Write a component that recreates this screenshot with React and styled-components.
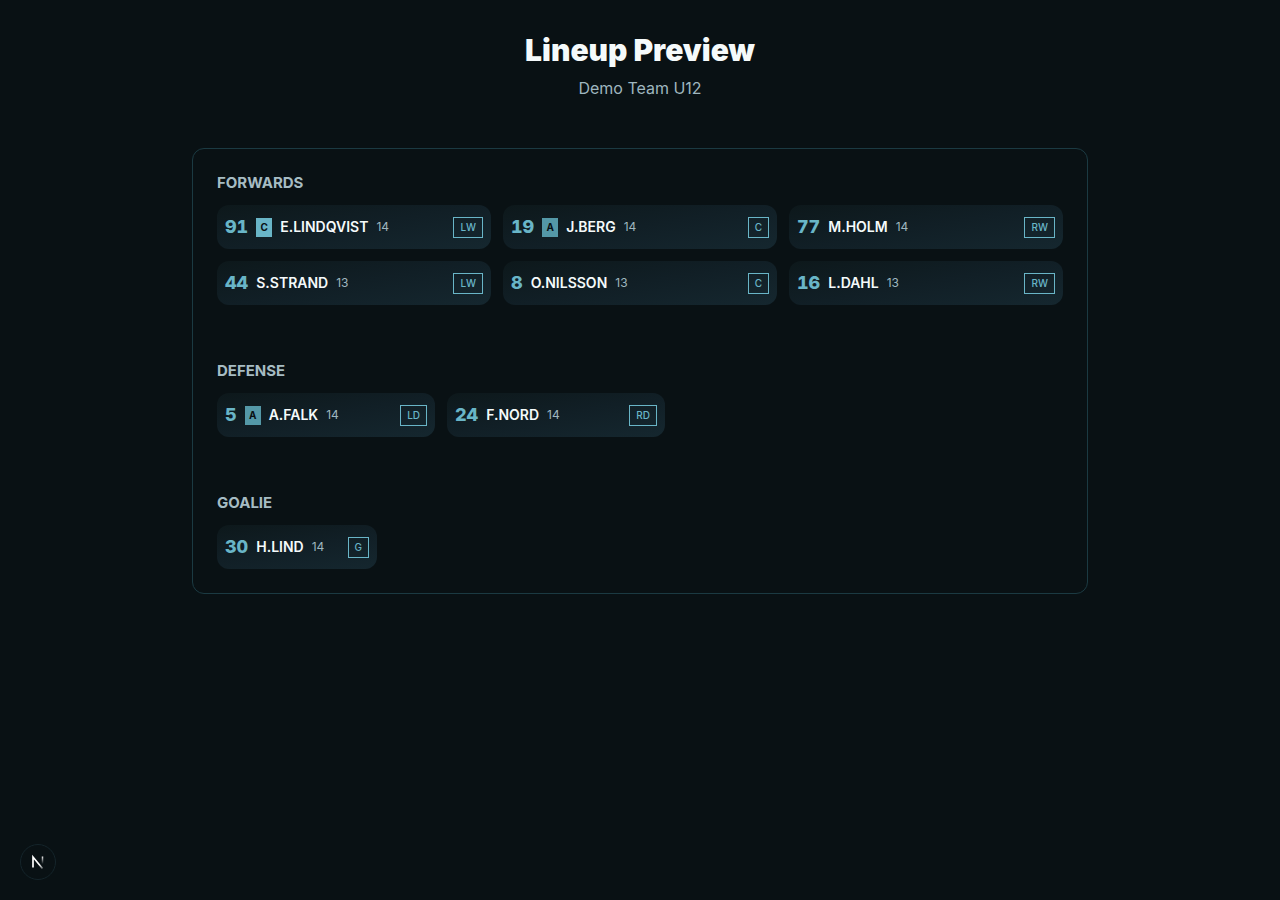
import React from 'react';
import styled, { createGlobalStyle } from 'styled-components';

const GlobalStyle = createGlobalStyle`
  *, *::before, *::after {
    box-sizing: border-box;
  }
  body {
    margin: 0;
    background: #091114;
    color: #f5fafb;
    font-family: Inter, 'Liberation Sans', sans-serif;
    -webkit-font-smoothing: antialiased;
  }
`;

const Page = styled.main`
  max-width: 960px;
  min-height: 100vh;
  margin: 0 auto;
  padding: 32px;
`;

const Header = styled.header`
  margin-bottom: 48px;
  text-align: center;
`;

const Title = styled.h1`
  margin: 0 0 8px;
  font-size: 30px;
  font-weight: 900;
  line-height: 36px;
`;

const Subtitle = styled.p`
  margin: 0;
  color: #9fb6bf;
  font-size: 16px;
  line-height: 24px;
`;

const Panel = styled.div`
  display: flex;
  flex-direction: column;
  gap: 56px;
  padding: 24px;
  border: 1px solid #1b3a42;
  border-radius: 12px;
`;

const SectionTitle = styled.h2`
  margin: 0 0 12px;
  color: #a6bcc3;
  font-size: 15px;
  font-weight: 700;
  line-height: 20px;
  text-transform: uppercase;
`;

const PlayerGrid = styled.ul`
  display: grid;
  grid-template-columns: repeat(${({ $columns }) => $columns}, minmax(0, 1fr));
  gap: 12px;
  max-width: ${({ $maxWidth }) => $maxWidth || 'none'};
  margin: 0;
  padding: 0;
  list-style: none;
`;

const Card = styled.li`
  display: flex;
  align-items: center;
  gap: 8px;
  height: 44px;
  padding: 0 8px;
  border-radius: 12px;
  background: linear-gradient(170deg, #0d181b 0%, #111f26 50%, #15272f 100%);
`;

const Number = styled.span`
  color: #69b5c7;
  font-size: 18px;
  font-weight: 800;
  line-height: 28px;
  font-variant-numeric: tabular-nums;
`;

const Role = styled.span`
  width: 16px;
  background: ${({ $captain }) => ($captain ? '#69b5c7' : '#5498a7')};
  color: #091114;
  font-size: 10px;
  font-weight: 700;
  line-height: 19px;
  text-align: center;
`;

const Name = styled.span`
  font-size: 14px;
  font-weight: 600;
  line-height: 20px;
`;

const Age = styled.span`
  color: #9fb6bf;
  font-size: 12px;
  line-height: 16px;
`;

const Position = styled.span`
  margin-left: auto;
  padding: 0 6px;
  border: 1px solid #69b5c7;
  color: #69b5c7;
  font-size: 10px;
  font-weight: 500;
  line-height: 19px;
`;

const DevButton = styled.button`
  position: fixed;
  bottom: 20px;
  left: 20px;
  display: flex;
  align-items: center;
  justify-content: center;
  width: 36px;
  height: 36px;
  padding: 0;
  border: 1px solid #15252b;
  border-radius: 50%;
  background: #091114;
`;

const sections = [
  {
    title: 'Forwards',
    columns: 3,
    players: [
      { number: 91, role: 'C', name: 'E.LINDQVIST', age: 14, position: 'LW' },
      { number: 19, role: 'A', name: 'J.BERG', age: 14, position: 'C' },
      { number: 77, name: 'M.HOLM', age: 14, position: 'RW' },
      { number: 44, name: 'S.STRAND', age: 13, position: 'LW' },
      { number: 8, name: 'O.NILSSON', age: 13, position: 'C' },
      { number: 16, name: 'L.DAHL', age: 13, position: 'RW' },
    ],
  },
  {
    title: 'Defense',
    columns: 2,
    maxWidth: '448px',
    players: [
      { number: 5, role: 'A', name: 'A.FALK', age: 14, position: 'LD' },
      { number: 24, name: 'F.NORD', age: 14, position: 'RD' },
    ],
  },
  {
    title: 'Goalie',
    columns: 1,
    maxWidth: '160px',
    players: [{ number: 30, name: 'H.LIND', age: 14, position: 'G' }],
  },
];

const PlayerCard = ({ number, role, name, age, position }) => (
  <Card>
    <Number>{number}</Number>
    {role && <Role $captain={role === 'C'}>{role}</Role>}
    <Name>{name}</Name>
    <Age>{age}</Age>
    <Position>{position}</Position>
  </Card>
);

const NextLogo = () => (
  <svg width="14" height="16" viewBox="0 0 14 16" fill="none" aria-hidden="true">
    <defs>
      <linearGradient id="diagonal" x1="7" y1="8" x2="13" y2="15" gradientUnits="userSpaceOnUse">
        <stop offset="0.3" stopColor="#fff" />
        <stop offset="1" stopColor="#fff" stopOpacity="0.2" />
      </linearGradient>
      <linearGradient id="stem" x1="11" y1="2" x2="11" y2="10" gradientUnits="userSpaceOnUse">
        <stop stopColor="#fff" />
        <stop offset="1" stopColor="#fff" stopOpacity="0" />
      </linearGradient>
    </defs>
    <path d="M2 13.5V3L11.5 14.5" stroke="url(#diagonal)" strokeWidth="1.7" />
    <path d="M11.5 2.5V10" stroke="url(#stem)" strokeWidth="1.5" />
  </svg>
);

const App = () => (
  <>
    <GlobalStyle />
    <Page>
      <Header>
        <Title>Lineup Preview</Title>
        <Subtitle>Demo Team U12</Subtitle>
      </Header>
      <Panel>
        {sections.map(({ title, columns, maxWidth, players }) => (
          <section key={title}>
            <SectionTitle>{title}</SectionTitle>
            <PlayerGrid $columns={columns} $maxWidth={maxWidth}>
              {players.map((player) => (
                <PlayerCard key={player.number} {...player} />
              ))}
            </PlayerGrid>
          </section>
        ))}
      </Panel>
    </Page>
    <DevButton type="button" aria-label="Open Next.js Dev Tools">
      <NextLogo />
    </DevButton>
  </>
);

export default App;
